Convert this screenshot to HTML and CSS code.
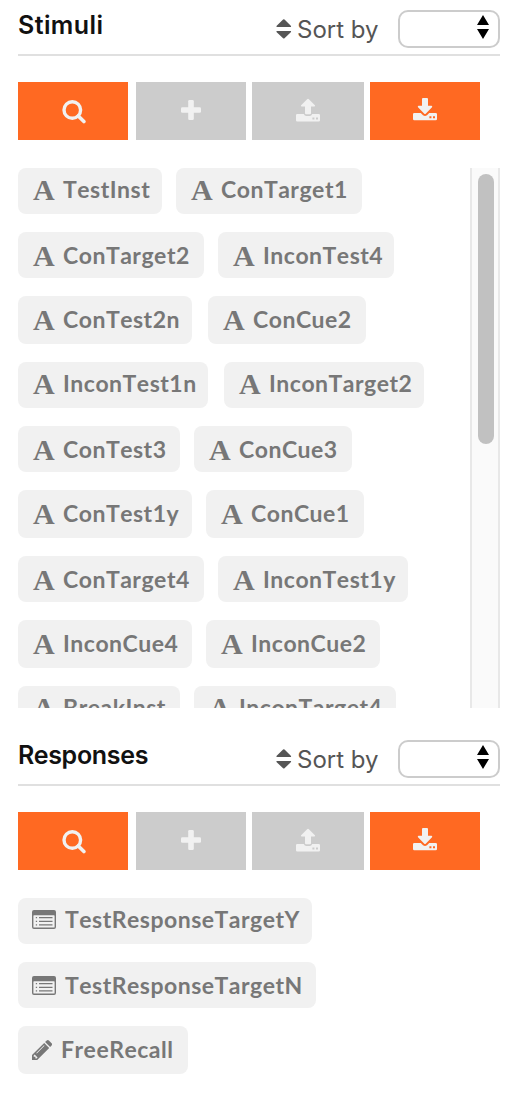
FILE: index.html
```html
<!DOCTYPE html>
<html lang="en">
<head>
    <meta charset="UTF-8">
    <title>Stimuli and Responses</title>
    <link rel="stylesheet" href="styles.css">
</head>
<body>
    <!-- shared icons -->
    <svg class="sprite" width="0" height="0">
        <symbol id="sort" viewBox="0 0 16 22">
            <path d="M.8 9h14q.7-.3 0-1.200L8.500 1.500q-.7-.6-1.400 0L.7 7.800Q0 8.700.8 9zM.8 13h14q.7.300 0 1.200l-6.300 6q-.7.600-1.400 0l-6.400-6Q0 13.300.8 13z"/>
        </symbol>
        <symbol id="arrows" viewBox="0 0 12 24">
            <path d="M6 0l6 10H0zM0 14h12L6 24z"/>
        </symbol>
        <symbol id="search" viewBox="0 0 24 24">
            <circle cx="10.300" cy="10" r="8.300" fill="none" stroke="currentColor" stroke-width="3.400"/>
            <path d="M16.300 16l5.600 5.600" stroke="currentColor" stroke-width="3.600" stroke-linecap="round"/>
        </symbol>
        <symbol id="plus" viewBox="0 0 20 20">
            <rect x="7.200" width="5.600" height="20" rx="1.300"/>
            <rect y="7.200" width="20" height="5.600" rx="1.300"/>
        </symbol>
        <symbol id="upload" viewBox="0 0 24 24">
            <path d="M12 .8q.5 0 .9.400l6 6q.6 1-.5 1.400H15v6.600q0 1-1 1h-4q-1 0-1-1V8.600H5.600q-1.100-.4-.5-1.400l6-6q.4-.4.9-.4z"/>
            <path fill-rule="evenodd" d="M1.300 16H7.800q.8 2 2.500 2h3.400q1.700 0 2.500-2h6.500q1.300 0 1.300 1.300v5q0 1.300-1.300 1.300H1.300Q0 23.600 0 22.300v-5Q0 16 1.300 16zM16.400 19.500v2h2v-2zM20 19.500v2h2v-2z"/>
        </symbol>
        <symbol id="download" viewBox="0 0 24 24">
            <path d="M10 0h4q1 0 1 1v6.800h3.500q1.200.3.500 1.500l-6.300 6.400q-.7.600-1.400 0L5 9.300Q4.300 8.100 5.500 7.800H9V1q0-1 1-1z"/>
            <path fill-rule="evenodd" d="M1.300 15h6.500l2.200 2.200q2 1.600 4 0l2.200-2.200h6.500q1.300 0 1.300 1.300v4.600q0 1.300-1.300 1.300H1.300Q0 22.200 0 20.900v-4.600Q0 15 1.300 15zM16.400 18.300v2h2v-2zM20 18.300v2h2v-2z"/>
        </symbol>
        <symbol id="list" viewBox="0 0 24 19">
            <path fill-rule="evenodd" d="M2 0h20q2 0 2 2v15q0 2-2 2H2q-2 0-2-2V2Q0 0 2 0zM2 5.300h20q.6 0 .6.600v11q0 .6-.6.600H2q-.6 0-.6-.6v-11q0-.6.600-.6z"/>
            <path d="M3.800 7h1.300v1.300H3.800zM7 7h13.500v1.300H7zM3.800 10.700h1.300V12H3.800zM7 10.700h13.500V12H7zM3.800 14.300h1.300v1.300H3.800zM7 14.300h13.500v1.300H7z"/>
        </symbol>
        <symbol id="pencil" viewBox="0 0 20 20">
            <path fill-rule="evenodd" d="M12.200 2.900l5 5L5.200 20H0v-5.100zM2.700 14.500l-1 1v1.200h1.700v1.700h1.200l1-1zM12 5.200l-7.700 7.700.5.500 7.700-7.700z"/>
            <path d="M13.100 2l1.600-1.500q1.100-1 2.200 0l2.700 2.700q1 1.100 0 2.200L18.100 7z"/>
        </symbol>
    </svg>

    <section class="panel">
        <header class="panel-header">
            <h2 class="stimuli-title">Stimuli</h2>
            <svg class="sort-icon"><use href="#sort"/></svg>
            <span class="sort-label">Sort by</span>
            <div class="select"><svg><use href="#arrows"/></svg></div>
        </header>
        <div class="toolbar">
            <button><svg class="search"><use href="#search"/></svg></button>
            <button class="disabled add"><svg class="plus"><use href="#plus"/></svg></button>
            <button class="disabled upload"><svg><use href="#upload"/></svg></button>
            <button><svg><use href="#download"/></svg></button>
        </div>
        <div class="scroll-area">
            <div class="chips">
                <div class="row high">
                    <div class="chip w144"><b>A</b><span>TestInst</span></div>
                    <div class="chip w186"><b>A</b><span>ConTarget1</span></div>
                </div>
                <div class="row">
                    <div class="chip w186"><b>A</b><span>ConTarget2</span></div>
                    <div class="chip w176"><b>A</b><span>InconTest4</span></div>
                </div>
                <div class="row tall wide-gap">
                    <div class="chip w174"><b>A</b><span>ConTest2n</span></div>
                    <div class="chip w158"><b>A</b><span>ConCue2</span></div>
                </div>
                <div class="row high wide-gap">
                    <div class="chip w190"><b>A</b><span>InconTest1n</span></div>
                    <div class="chip w200"><b>A</b><span>InconTarget2</span></div>
                </div>
                <div class="row">
                    <div class="chip w162"><b>A</b><span>ConTest3</span></div>
                    <div class="chip w158"><b>A</b><span>ConCue3</span></div>
                </div>
                <div class="row tall">
                    <div class="chip w174"><b>A</b><span>ConTest1y</span></div>
                    <div class="chip w158"><b>A</b><span>ConCue1</span></div>
                </div>
                <div class="row">
                    <div class="chip w186"><b>A</b><span>ConTarget4</span></div>
                    <div class="chip w190"><b>A</b><span>InconTest1y</span></div>
                </div>
                <div class="row tall">
                    <div class="chip w174"><b>A</b><span>InconCue4</span></div>
                    <div class="chip w174"><b>A</b><span>InconCue2</span></div>
                </div>
                <div class="row high">
                    <div class="chip w162"><b>A</b><span>BreakInst</span></div>
                    <div class="chip w202"><b>A</b><span>InconTarget4</span></div>
                </div>
            </div>
            <div class="scrollbar"><div class="thumb"></div></div>
        </div>
    </section>

    <section class="panel">
        <header class="panel-header">
            <h2>Responses</h2>
            <svg class="sort-icon"><use href="#sort"/></svg>
            <span class="sort-label">Sort by</span>
            <div class="select"><svg><use href="#arrows"/></svg></div>
        </header>
        <div class="toolbar">
            <button><svg class="search"><use href="#search"/></svg></button>
            <button class="disabled add"><svg class="plus"><use href="#plus"/></svg></button>
            <button class="disabled upload"><svg><use href="#upload"/></svg></button>
            <button><svg><use href="#download"/></svg></button>
        </div>
        <div class="chips">
            <div class="row high">
                <div class="chip w294"><svg class="list"><use href="#list"/></svg><span>TestResponseTargetY</span></div>
            </div>
            <div class="row">
                <div class="chip w298"><svg class="list"><use href="#list"/></svg><span>TestResponseTargetN</span></div>
            </div>
            <div class="row tall">
                <div class="chip w170"><svg class="pencil"><use href="#pencil"/></svg><span>FreeRecall</span></div>
            </div>
        </div>
    </section>
</body>
</html>
```
FILE: styles.css
```css
* {
    box-sizing: border-box;
}

body {
    margin: 0;
    background: #fff;
    font-family: Inter, sans-serif;
}

.sprite {
    display: block;
}

svg {
    fill: currentColor;
    flex: none;
}

.panel {
    width: 482px;
    margin-left: 18px;
}

.panel + .panel {
    margin-top: 22px;
}

/* header */
.panel-header {
    display: flex;
    height: 56px;
    border-bottom: 2px solid #e0e0e0;
}

h2 {
    width: 258px;
    margin: 10px 0 0;
    font-size: 25px;
    font-weight: 600;
    line-height: 30px;
    letter-spacing: -0.3px;
    color: #111;
}

.stimuli-title {
    letter-spacing: 0.4px;
}

.sort-icon {
    width: 16px;
    height: 22px;
    margin-top: 18px;
    color: #555;
}

.sort-label {
    width: 99px;
    margin: 15px 0 0 5px;
    font-size: 24px;
    line-height: 30px;
    color: #555;
    white-space: nowrap;
}

.select {
    width: 102px;
    height: 38px;
    margin-top: 10px;
    margin-left: 2px;
    border: 2px solid #ccc;
    border-radius: 10px;
    display: flex;
    justify-content: flex-end;
    padding: 3px 9px 0 0;
    color: #000;
}

.select svg {
    width: 12px;
    height: 24px;
}

/* buttons */
.toolbar {
    display: flex;
    margin: 26px 0 28px;
}

button {
    width: 110px;
    height: 58px;
    padding: 16px 0 0;
    border: 0;
    background: #ff6922;
    color: #f1f1f1;
    display: flex;
    align-items: flex-start;
    justify-content: center;
}

button.disabled {
    background: #ccc;
}

button.add {
    margin: 0 6px 0 8px;
}

button.upload {
    width: 112px;
    margin-right: 6px;
}

button svg {
    width: 24px;
    height: 24px;
}

button .search {
    margin-top: 2px;
    margin-left: 1px;
}

button .plus {
    width: 20px;
    height: 20px;
    margin-top: 2px;
}

/* item lists */
.scroll-area {
    display: flex;
    justify-content: space-between;
    height: 540px;
    overflow: hidden;
}

.chips {
    display: flex;
    flex-direction: column;
    gap: 18px;
}

.row {
    display: flex;
    flex: none;
    gap: 14px;
    height: 46px;
}

.row.tall {
    height: 48px;
}

.row.wide-gap {
    gap: 16px;
}

.chip {
    display: flex;
    align-items: flex-start;
    padding: 8px 0 0 14px;
    border-radius: 8px;
    background: #f1f1f1;
    color: #777;
    white-space: nowrap;
}

.high .chip {
    padding-top: 6px;
}

.chip b {
    width: 22px;
    margin: 1px 8px 0 1px;
    font: bold 30px/30px "Liberation Serif", serif;
}

.chip span {
    font: bold 23px/30px Lato, sans-serif;
    font-kerning: none;
    letter-spacing: 0.5px;
}

.list {
    width: 24px;
    height: 19px;
    margin: 6px 9px 0 0;
}

.pencil {
    width: 20px;
    height: 20px;
    margin: 6px 9px 0 0;
}

.w144 { width: 144px; }
.w158 { width: 158px; }
.w162 { width: 162px; }
.w170 { width: 170px; }
.w174 { width: 174px; }
.w176 { width: 176px; }
.w186 { width: 186px; }
.w190 { width: 190px; }
.w200 { width: 200px; }
.w202 { width: 202px; }
.w294 { width: 294px; }
.w298 { width: 298px; }

.scrollbar {
    width: 30px;
    padding: 6px 4px 0 6px;
    border: solid #e8e8e8;
    border-width: 0 2px;
    background: #fafafa;
}

.thumb {
    width: 16px;
    height: 270px;
    border-radius: 8px;
    background: #c1c1c1;
}
```
